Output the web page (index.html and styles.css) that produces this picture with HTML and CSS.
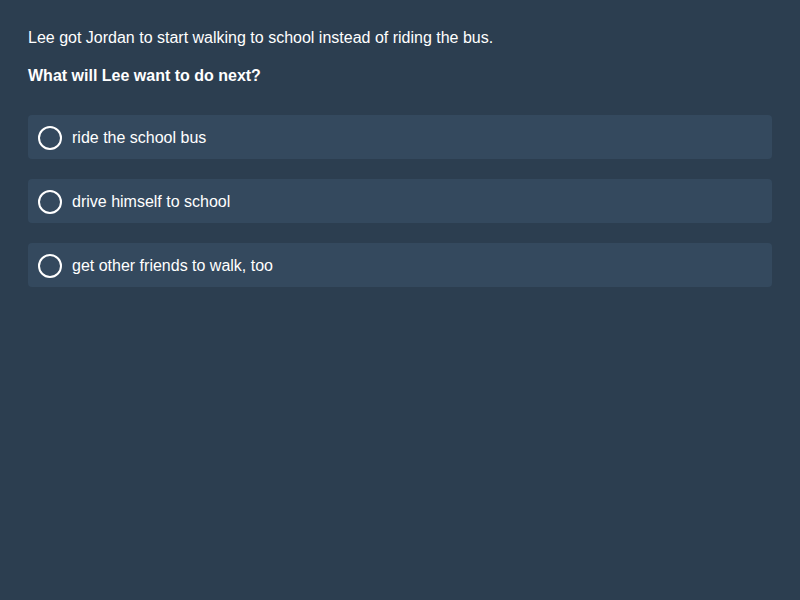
FILE: index.html
```html
<!DOCTYPE html>
<html>
<head>
<meta charset="utf-8">
<link rel="stylesheet" href="styles.css">
</head>
<body>
<div class="quiz">
  <p class="context">Lee got Jordan to start walking to school instead of riding the bus.</p>
  <p class="question">What will Lee want to do next?</p>
  <div class="options">
    <label class="option"><span class="radio"></span><span class="label">ride the school bus</span></label>
    <label class="option"><span class="radio"></span><span class="label">drive himself to school</span></label>
    <label class="option"><span class="radio"></span><span class="label">get other friends to walk, too</span></label>
  </div>
</div>
</body>
</html>
```
FILE: styles.css
```css
html, body {
  margin: 0;
  padding: 0;
  background: #2c3e50;
  height: 100%;
}
body {
  font-family: "Liberation Sans", Arial, sans-serif;
  font-size: 16px;
  color: #ffffff;
}
.quiz {
  padding: 28px;
}
.context {
  margin: 0 0 18px 0;
  line-height: 20px;
}
.question {
  margin: 0 0 29px 0;
  font-weight: bold;
  line-height: 20px;
}
.options {
  display: flex;
  flex-direction: column;
  gap: 20px;
}
.option {
  display: flex;
  align-items: center;
  gap: 10px;
  height: 44px;
  padding: 0 10px;
  background: #34495e;
  border-radius: 4px;
  box-sizing: border-box;
}
.radio {
  width: 24px;
  height: 24px;
  margin-top: 1px;
  border: 2px solid #ffffff;
  border-radius: 50%;
  box-sizing: border-box;
  flex: none;
}
.label {
  line-height: 20px;
  padding-top: 2px;
}
```
